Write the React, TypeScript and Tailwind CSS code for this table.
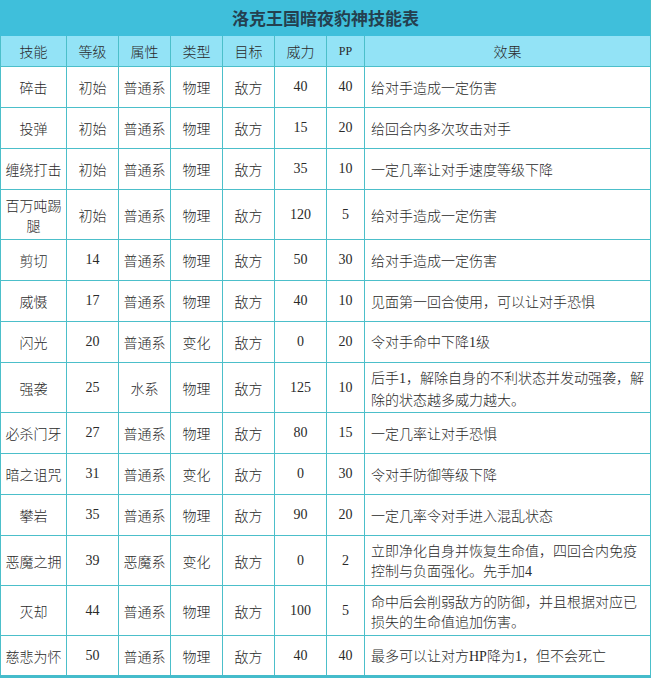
import React from "react";

type Row = {
  name: React.ReactNode;
  level: string;
  attr: string;
  kind: string;
  target: string;
  power: string;
  pp: string;
  effect: React.ReactNode;
  tall?: boolean;
};

const rows: Row[] = [
  { name: "碎击", level: "初始", attr: "普通系", kind: "物理", target: "敌方", power: "40", pp: "40", effect: "给对手造成一定伤害" },
  { name: "投弹", level: "初始", attr: "普通系", kind: "物理", target: "敌方", power: "15", pp: "20", effect: "给回合内多次攻击对手" },
  { name: "缠绕打击", level: "初始", attr: "普通系", kind: "物理", target: "敌方", power: "35", pp: "10", effect: "一定几率让对手速度等级下降" },
  { name: (<>百万吨踢<br />腿</>), level: "初始", attr: "普通系", kind: "物理", target: "敌方", power: "120", pp: "5", effect: "给对手造成一定伤害", tall: true },
  { name: "剪切", level: "14", attr: "普通系", kind: "物理", target: "敌方", power: "50", pp: "30", effect: "给对手造成一定伤害" },
  { name: "威慑", level: "17", attr: "普通系", kind: "物理", target: "敌方", power: "40", pp: "10", effect: "见面第一回合使用，可以让对手恐惧" },
  { name: "闪光", level: "20", attr: "普通系", kind: "变化", target: "敌方", power: "0", pp: "20", effect: (<>令对手命中下降<span className="font-['Liberation_Serif',serif]">1</span>级</>) },
  { name: "强袭", level: "25", attr: "水系", kind: "物理", target: "敌方", power: "125", pp: "10", effect: (<>后手<span className="font-['Liberation_Serif',serif]">1</span>，解除自身的不利状态并发动强袭，解<br />除的状态越多威力越大。</>), tall: true },
  { name: "必杀门牙", level: "27", attr: "普通系", kind: "物理", target: "敌方", power: "80", pp: "15", effect: "一定几率让对手恐惧" },
  { name: "暗之诅咒", level: "31", attr: "普通系", kind: "变化", target: "敌方", power: "0", pp: "30", effect: "令对手防御等级下降" },
  { name: "攀岩", level: "35", attr: "普通系", kind: "物理", target: "敌方", power: "90", pp: "20", effect: "一定几率令对手进入混乱状态" },
  { name: "恶魔之拥", level: "39", attr: "恶魔系", kind: "变化", target: "敌方", power: "0", pp: "2", effect: (<>立即净化自身并恢复生命值，四回合内免疫<br />控制与负面强化。先手加<span className="font-['Liberation_Serif',serif]">4</span></>), tall: true },
  { name: "灭却", level: "44", attr: "普通系", kind: "物理", target: "敌方", power: "100", pp: "5", effect: (<>命中后会削弱敌方的防御，并且根据对应已<br />损失的生命值追加伤害。</>), tall: true },
  { name: "慈悲为怀", level: "50", attr: "普通系", kind: "物理", target: "敌方", power: "40", pp: "40", effect: (<>最多可以让对方<span className="font-['Liberation_Serif',serif]">HP</span>降为<span className="font-['Liberation_Serif',serif]">1</span>，但不会死亡</>) },
];

const isNum = (s: string) => /^[0-9]+$/.test(s);

function Cell({ children, num }: { children: React.ReactNode; num?: boolean }) {
  return (
    <td
      className={
        num
          ? "border border-[#4cbfca] px-[2px] text-center align-middle font-['Liberation_Serif',serif] text-[14px]"
          : "border border-[#4cbfca] px-[2px] text-center align-middle"
      }
    >
      {children}
    </td>
  );
}

export default function App() {
  const headers = ["技能", "等级", "属性", "类型", "目标", "威力", "PP", "效果"];
  return (
    <div className="w-[652px] h-[680px] bg-white overflow-hidden">
      <table className="table-fixed border-collapse w-[650px] font-['Noto_Sans_CJK_SC',sans-serif] font-light text-[14px] leading-[20px] text-[#2a2a2a] border-b-[3px] border-b-[#45bccb]">
        <colgroup>
          <col className="w-[66px]" />
          <col className="w-[52px]" />
          <col className="w-[52px]" />
          <col className="w-[52px]" />
          <col className="w-[52px]" />
          <col className="w-[52px]" />
          <col className="w-[38px]" />
          <col className="w-[286px]" />
        </colgroup>
        <tbody>
          <tr className="h-[35px] bg-[#3fbfdb]">
            <td colSpan={8} className="border border-[#3fbfdb] border-r-[#4cbfca] text-center align-middle font-bold text-[17px] text-[#24404f]">
              洛克王国暗夜豹神技能表
            </td>
          </tr>
          <tr className="h-[31px] bg-[#93e3f6]">
            {headers.map((h) => (
              <td
                key={h}
                className={
                  h === "PP"
                    ? "border border-[#4cbfca] text-center align-middle font-['Liberation_Serif',serif] text-[12px]"
                    : "border border-[#4cbfca] text-center align-middle"
                }
              >
                {h}
              </td>
            ))}
          </tr>
          {rows.map((r, i) => (
            <tr key={i} className={r.tall ? "h-[50px] bg-white" : "h-[41px] bg-white"}>
              <Cell>{r.name}</Cell>
              <Cell num={isNum(r.level)}>{r.level}</Cell>
              <Cell>{r.attr}</Cell>
              <Cell>{r.kind}</Cell>
              <Cell>{r.target}</Cell>
              <Cell num>{r.power}</Cell>
              <Cell num>{r.pp}</Cell>
              <td className="border border-[#4cbfca] pl-[6px] pr-[2px] text-left align-middle whitespace-nowrap">
                {r.effect}
              </td>
            </tr>
          ))}
        </tbody>
      </table>
    </div>
  );
}
